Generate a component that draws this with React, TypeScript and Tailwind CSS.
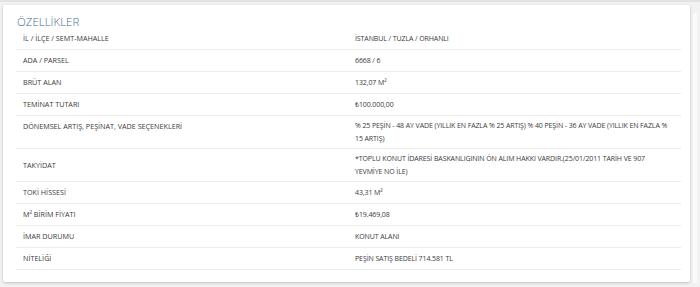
import React from 'react';

interface Row {
    label: string;
    value: string;
    tall?: boolean;
    labelTop?: boolean;
}

const rows: Row[] = [
    { label: 'İL / İLÇE / SEMT-MAHALLE', value: 'İSTANBUL / TUZLA / ORHANLI' },
    { label: 'ADA / PARSEL', value: '6668 / 6' },
    { label: 'BRÜT ALAN', value: '132,07 M²' },
    { label: 'TEMİNAT TUTARI', value: '₺100.000,00' },
    {
        label: 'DÖNEMSEL ARTIŞ, PEŞİNAT, VADE SEÇENEKLERİ',
        value: '% 25 PEŞİN - 48 AY VADE (YILLIK EN FAZLA % 25 ARTIŞ) % 40 PEŞİN - 36 AY VADE (YILLIK EN FAZLA % 15 ARTIŞ)',
        tall: true,
        labelTop: true
    },
    {
        label: 'TAKYİDAT',
        value: '*TOPLU KONUT İDARESİ BASKANLIGININ ÖN ALIM HAKKI VARDIR.(25/01/2011 TARİH VE 907 YEVMİYE NO İLE)',
        tall: true
    },
    { label: 'TOKİ HİSSESİ', value: '43,31 M²' },
    { label: 'M² BİRİM FİYATI', value: '₺19.469,08' },
    { label: 'İMAR DURUMU', value: 'KONUT ALANI' },
    { label: 'NİTELİĞİ', value: 'PEŞİN SATIŞ BEDELİ 714.581 TL' }
];

const App: React.FC = () => {
    return (
        <div className="w-[700px] h-[287px] bg-[#f2f2f2] overflow-hidden font-['Open_Sans',sans-serif] border-t-[2px] border-[#e2e2e2] pt-[3px] pl-[3px] flex">
            <div className="w-[687px] h-[277px] bg-white rounded-[2px] shadow-[0_1px_3px_rgba(0,0,0,0.2)] pl-[13px] pr-[9px]">
                <h2 className="pt-[9px] pl-[1px] h-[25px] text-[11.5px] leading-[16px] font-light text-[#4d6f8d]">
                    ÖZELLİKLER
                </h2>
                <div className="text-[7.2px] text-[#3a3a3a]">
                    {rows.map((row, i) => (
                        <div
                            key={i}
                            className={`flex border-b border-[#ececec] ${row.tall ? 'h-[33px] items-center' : i === 0 ? 'h-[20px] items-center pb-[2px]' : 'h-[22px] items-center'}`}
                        >
                            <div className={`w-[339px] shrink-0 pl-[7px] leading-[13px] ${row.labelTop ? 'self-start pt-[4px]' : ''}`}>{row.label}</div>
                            <div className="w-[316px] leading-[13px] text-[7px] tracking-[-0.1px]">{row.value}</div>
                        </div>
                    ))}
                </div>
            </div>
            <div className="ml-[3px] mt-[8px] w-[4px] h-[270px] bg-[#fafafa]" />
        </div>
    );
};

export default App;
